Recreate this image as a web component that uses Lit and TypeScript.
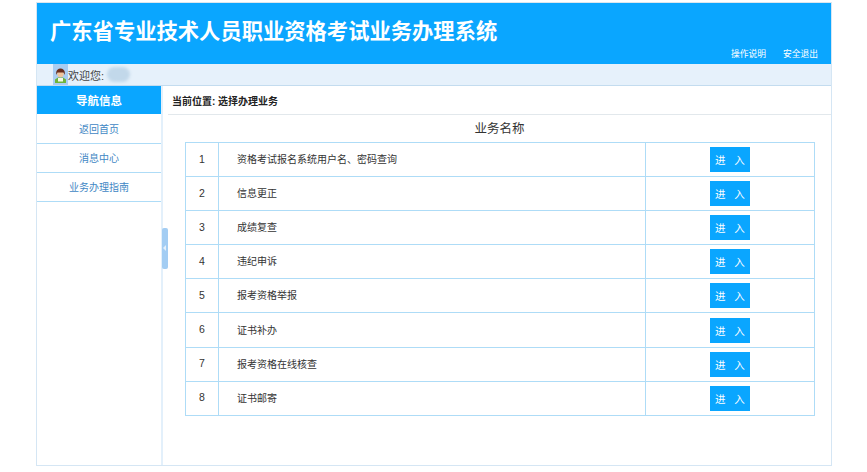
import { LitElement, html, css } from 'lit';
import { customElement } from 'lit/decorators.js';

const NAV_ITEMS = ['返回首页', '消息中心', '业务办理指南'];

const BUSINESS = [
  '资格考试报名系统用户名、密码查询',
  '信息更正',
  '成绩复查',
  '违纪申诉',
  '报考资格举报',
  '证书补办',
  '报考资格在线核查',
  '证书邮寄',
];

@customElement('app-root')
export class AppRoot extends LitElement {
  static styles = css`
    :host {
      display: block;
      height: 472px;
      padding: 2px 35px 0 36px;
      box-sizing: border-box;
      background: #fff;
      font-family: "Liberation Sans", "Noto Sans CJK SC", sans-serif;
      overflow: hidden;
    }

    .frame {
      height: 464px;
      display: flex;
      flex-direction: column;
      box-sizing: border-box;
      border-top: 1px solid #dce6ee;
      border-left: 1px solid #d5e6f4;
      border-right: 1px solid #d5e6f4;
      border-bottom: 1px solid #d5e6f4;
    }

    .header {
      height: 61px;
      flex: none;
      background: #0aa6ff;
      color: #fff;
      display: flex;
      justify-content: space-between;
      padding: 0 13px 0 13px;
    }

    .title {
      font-size: 21.3px;
      font-weight: bold;
      line-height: 26px;
      margin-top: 16px;
    }

    .links {
      align-self: flex-end;
      display: flex;
      gap: 17px;
      font-size: 8.75px;
      line-height: 14px;
      padding-bottom: 3px;
    }

    .welcome {
      height: 22px;
      flex: none;
      box-sizing: border-box;
      background: #e6f1fb;
      border-bottom: 1px solid #c3dcef;
      display: flex;
      align-items: center;
      padding-left: 16px;
      font-size: 11px;
      color: #444;
    }

    .avatar {
      width: 15px;
      height: 21px;
      background: #a9cdf2;
      flex: none;
      align-self: flex-start;
    }

    .avatar svg {
      display: block;
    }

    .blur {
      width: 23px;
      height: 15px;
      margin-left: 3px;
      border-radius: 8px;
      background: #c2d8ea;
      filter: blur(1.5px);
    }

    .body {
      flex: 1;
      display: flex;
      min-height: 0;
    }

    .side {
      width: 126px;
      flex: none;
      box-sizing: border-box;
      border-right: 2px solid #e3f0fb;
      position: relative;
    }

    .side-head {
      height: 28px;
      background: #0aa6ff;
      color: #fff;
      font-size: 11.5px;
      font-weight: bold;
      display: flex;
      align-items: center;
      justify-content: center;
      margin-bottom: 1px;
    }

    .nav {
      height: 29px;
      box-sizing: border-box;
      border-bottom: 1px solid #aedcf7;
      padding-bottom: 2px;
      display: flex;
      align-items: center;
      justify-content: center;
      font-size: 10px;
      color: #3f87c4;
    }

    .toggle {
      position: absolute;
      left: 125px;
      top: 142px;
      width: 6px;
      height: 41px;
      border-radius: 2px;
      background: #a3cdf3;
    }

    .toggle::after {
      content: '';
      position: absolute;
      left: 1px;
      top: 17px;
      border: 3px solid transparent;
      border-left-width: 0;
      border-right: 3px solid #e4f0fb;
    }

    .main {
      flex: 1;
      min-width: 0;
      padding-left: 5px;
    }

    .crumb {
      height: 29px;
      box-sizing: border-box;
      border-bottom: 1px solid #e2e8ec;
      display: flex;
      align-items: center;
      padding-left: 4px;
      font-size: 10px;
      font-weight: bold;
      color: #222;
    }

    .caption {
      text-align: center;
      font-size: 12.5px;
      line-height: 29px;
      height: 27px;
      color: #333;
    }

    table {
      width: 630px;
      margin-left: 17px;
      border-collapse: collapse;
      table-layout: fixed;
      font-size: 10px;
      color: #333;
    }

    td {
      height: 33.1px;
      padding: 0;
      border: 1px solid #aedcf7;
    }

    .num {
      width: 32px;
      height: 31.1px;
      padding-bottom: 2px;
      text-align: center;
      font-size: 10.5px;
    }

    .name {
      height: 31.1px;
      padding: 0 0 2px 18px;
    }

    .act {
      width: 168px;
      text-align: center;
    }

    .enter {
      display: inline-block;
      vertical-align: middle;
      width: 40px;
      height: 25px;
      line-height: 27px;
      background: #0aa6ff;
      color: #fff;
      font-size: 10.5px;
      text-align: center;
    }
  `;

  render() {
    return html`
      <div class="frame">
        <div class="header">
          <div class="title">广东省专业技术人员职业资格考试业务办理系统</div>
          <div class="links"><span>操作说明</span><span>安全退出</span></div>
        </div>
        <div class="welcome">
          <div class="avatar">
            <svg width="15" height="21" viewBox="0 0 15 21">
              <path d="M2 19v-3.500l3-2h5l3 2V19z" fill="#6fb53a" />
              <rect x="5" y="14" width="5" height="3.500" fill="#f4f7ea" />
              <circle cx="7.500" cy="10" r="3.200" fill="#f0c49b" />
              <path d="M3.200 11V8.500a4.300 4 0 0 1 8.600 0V11l-1.300-2.500h-6z" fill="#6a2d1c" />
            </svg>
          </div>
          <span>欢迎您:</span>
          <div class="blur"></div>
        </div>
        <div class="body">
          <div class="side">
            <div class="side-head">导航信息</div>
            ${NAV_ITEMS.map((n) => html`<div class="nav">${n}</div>`)}
            <div class="toggle"></div>
          </div>
          <div class="main">
            <div class="crumb">当前位置: 选择办理业务</div>
            <div class="caption">业务名称</div>
            <table>
              ${BUSINESS.map(
                (b, i) => html`
                  <tr>
                    <td class="num">${i + 1}</td>
                    <td class="name">${b}</td>
                    <td class="act"><span class="enter">进&nbsp;&nbsp;&nbsp;入</span></td>
                  </tr>
                `
              )}
            </table>
          </div>
        </div>
      </div>
    `;
  }
}
